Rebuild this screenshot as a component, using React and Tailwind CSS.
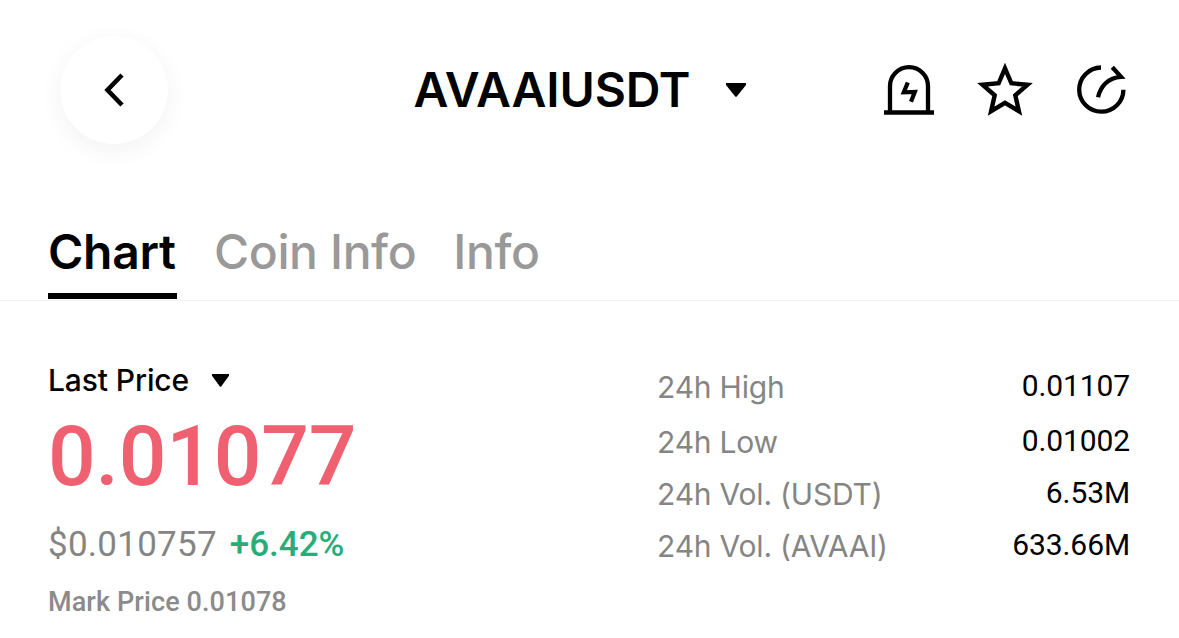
const tabs = ["Chart", "Coin Info", "Info"];

const stats = [
  { label: "24h High", value: "0.01107", row: "h-[55px]" },
  { label: "24h Low", value: "0.01002", row: "h-[52px]" },
  { label: "24h Vol. (USDT)", value: "6.53M", row: "h-[52px]" },
  { label: "24h Vol. (AVAAI)", value: "633.66M", row: "h-[52px]" },
];

const Caret = ({ className }) => (
  <svg viewBox="0 0 20 14" preserveAspectRatio="none" className={className} fill="currentColor">
    <path d="M0 0H20V2L10.8 13.4Q10 14.2 9.2 13.4L0 2Z" />
  </svg>
);

const AlertIcon = () => (
  <svg width="50" height="54" viewBox="884 62.5 50 54" fill="none" stroke="currentColor" strokeWidth="4.3">
    <path d="M884 112H934M890 111V85.6A19 19 0 0 1 928 85.6V111" />
    <path d="M907.8 82L903.8 91.8L914.8 91.4L911 101.2" strokeWidth="4.2" />
  </svg>
);

const StarIcon = () => (
  <svg width="56" height="54" viewBox="-28 -29 56 54" fill="none" stroke="currentColor" strokeWidth="4.4">
    <path d="M0 -23.7L6.35 -8.75L22.5 -7.3L10.3 3.35L13.9 19.2L0 10.8L-13.9 19.2L-10.3 3.35L-22.5 -7.3L-6.35 -8.75Z" />
  </svg>
);

const ShareIcon = () => (
  <svg width="50" height="54" viewBox="1076 62.5 50 54" fill="none" stroke="currentColor" strokeWidth="4.3">
    <path d="M1101 67A22.1 22.1 0 1 0 1123.4 89.2" />
    <path d="M1098 96.8C1100.5 86 1108 77 1121 76.3L1112.3 66.8" />
  </svg>
);

const Header = () => (
  <header className="flex h-[180px] items-center justify-between pl-[60px] pr-[53px]">
    <button className="flex size-[108px] items-center justify-center rounded-full bg-white shadow-[0_6px_24px_rgba(0,0,0,0.055)]">
      <svg width="20" height="34" viewBox="0 0 20 34" fill="none" stroke="currentColor" strokeWidth="4.6" className="-ml-px">
        <path d="M18 2L3.5 17L18 32" />
      </svg>
    </button>

    <div className="ml-[107px] flex items-center gap-[37px]">
      <h1 className="w-[275px] whitespace-nowrap text-[48px] font-semibold leading-[60px] tracking-[-0.1px]">
        AVAAIUSDT
      </h1>
      <Caret className="h-[14px] w-[20px]" />
    </div>

    <div className="flex items-center gap-[43px]">
      <AlertIcon />
      <StarIcon />
      <ShareIcon />
    </div>
  </header>
);

const Tabs = () => (
  <nav className="flex h-[121px] items-end gap-[37px] border-b border-[#f3f3f3] px-12 text-[48px] leading-[60px]">
    {tabs.map((tab, i) => (
      <button
        key={tab}
        className={
          i === 0
            ? "mb-px h-[77px] w-[129px] whitespace-nowrap border-b-[6px] border-black pb-[11px] text-left font-semibold tracking-[-0.3px]"
            : "h-[78px] whitespace-nowrap pb-[18px] text-left font-medium tracking-[-0.4px] text-[#999999]"
        }
      >
        {tab}
      </button>
    ))}
  </nav>
);

const Price = () => (
  <section className="font-[Roboto,sans-serif]">
    <div className="flex h-[40px] items-center gap-[23px] font-[Inter,sans-serif] text-[30px] font-medium leading-[40px] tracking-[-0.1px]">
      <span>Last Price</span>
      <Caret className="h-[13px] w-[17px]" />
    </div>
    <p className="mt-[7px] text-[84px] font-medium leading-[100px] tracking-[-0.2px] text-[#ef6070]">0.01077</p>
    <p className="mt-[16px] text-[35px] leading-[44px] tracking-[0.25px] text-[#858585]">
      $0.010757 <span className="ml-[4px] font-medium tracking-normal text-[#26ad78]">+6.42%</span>
    </p>
    <p className="mt-[15px] text-[27px] font-medium leading-[40px] tracking-[0.1px] text-[#8b8b8b]">Mark Price 0.01078</p>
  </section>
);

const Stats = () => (
  <section className="w-[473px] pt-[6px] text-[30px] leading-[40px]">
    {stats.map((s) => (
      <div key={s.label} className={`flex justify-between whitespace-nowrap ${s.row}`}>
        <span className="pt-px tracking-[-0.2px] text-[#858585]">{s.label}</span>
        <span className="font-[Roboto,sans-serif] tracking-[-0.1px]">{s.value}</span>
      </div>
    ))}
  </section>
);

const App = () => {
  return (
    <div className="h-[638px] overflow-hidden bg-white font-[Inter,sans-serif] text-black">
      <Header />
      <Tabs />
      <main className="flex justify-between pl-12 pr-[49px] pt-[59px]">
        <Price />
        <Stats />
      </main>
    </div>
  );
};

export default App;
